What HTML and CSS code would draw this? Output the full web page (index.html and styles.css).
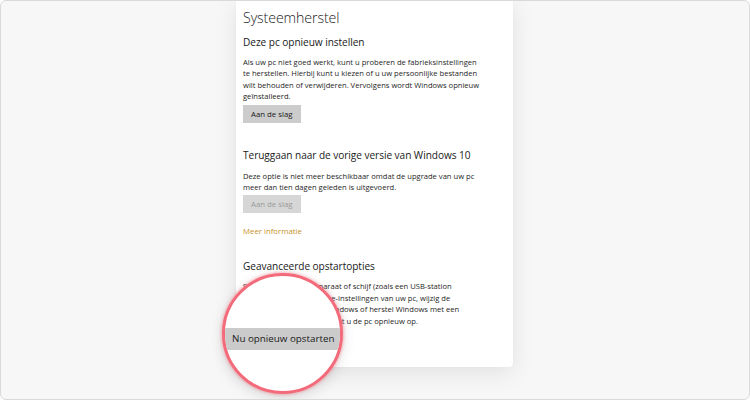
FILE: index.html
```html
<!DOCTYPE html>
<html lang="nl">
<head>
<meta charset="utf-8">
<title>Systeemherstel</title>
<link rel="stylesheet" href="styles.css">
</head>
<body>
<div class="frame">
  <main class="panel">
    <h1 class="title">Systeemherstel</h1>

    <section class="section">
      <h2 class="heading">Deze pc opnieuw instellen</h2>
      <p class="text">Als uw pc niet goed werkt, kunt u proberen de fabrieksinstellingen<br>te herstellen. Hierbij kunt u kiezen of u uw persoonlijke bestanden<br>wilt behouden of verwijderen. Vervolgens wordt Windows opnieuw<br>geïnstalleerd.</p>
      <button class="btn">Aan de slag</button>
    </section>

    <section class="section">
      <h2 class="heading">Teruggaan naar de vorige versie van Windows 10</h2>
      <p class="text">Deze optie is niet meer beschikbaar omdat de upgrade van uw pc<br>meer dan tien dagen geleden is uitgevoerd.</p>
      <button class="btn btn-disabled" disabled>Aan de slag</button>
      <a class="link" href="#">Meer informatie</a>
    </section>

    <section class="section">
      <h2 class="heading">Geavanceerde opstartopties</h2>
      <p class="text">Start op vanaf een apparaat of schijf (zoals een USB-station<br>of dvd), wijzig de firmware-instellingen van uw pc, wijzig de<br>opstartinstellingen van Windows of herstel Windows met een<br>systeemkopie. Hiermee start u de pc opnieuw op.</p>
      <button class="btn btn-under-lens" aria-hidden="true">Nu opnieuw opstarten</button>
    </section>
  </main>

  <div class="magnifier">
    <div class="zoom-btn">Nu opnieuw opstarten</div>
  </div>
</div>
</body>
</html>
```

FILE: styles.css
```css
* { box-sizing: border-box; }

html, body {
  margin: 0;
  padding: 0;
  width: 750px;
  height: 400px;
  overflow: hidden;
  background: #ffffff;
  font-family: "Open Sans", "Noto Sans", "Liberation Sans", sans-serif;
}

.frame {
  position: relative;
  width: 750px;
  height: 400px;
  background: #f7f7f7;
  border: 1px solid #d9d9d9;
  border-radius: 6px;
  overflow: hidden;
  display: flex;
  align-items: flex-start;
}

.panel {
  margin-left: 235px;
  width: 277px;
  height: 366px;
  background: #ffffff;
  border-radius: 0 0 4px 4px;
  box-shadow: 0 6px 24px rgba(0, 0, 0, 0.09), 0 0 3px rgba(0, 0, 0, 0.03);
  padding: 6px 0 0 7px;
  color: #1a1a1a;
}

.title {
  margin: 0;
  font-size: 14.2px;
  font-weight: 300;
  line-height: 22px;
  letter-spacing: -0.1px;
}

.section {
  display: flex;
  flex-direction: column;
  align-items: flex-start;
}

.heading {
  margin: 0;
  font-size: 10.1px;
  font-weight: 400;
  line-height: 16px;
  letter-spacing: -0.05px;
}

.text {
  margin: 7px 0 0;
  font-size: 7.6px;
  line-height: 11.4px;
  color: #1e1e1e;
}

.section:nth-of-type(1) .heading { margin-top: 5px; }
.section:nth-of-type(2) .heading { margin-top: 24px; }
.section:nth-of-type(2) .text { margin-top: 8px; }
.section:nth-of-type(3) .heading { margin-top: 22px; }

.btn {
  margin-top: 2px;
  height: 18px;
  padding: 0 8px;
  border: none;
  background: #cccccc;
  color: #1a1a1a;
  font-family: inherit;
  font-size: 7.8px;
  min-width: 56px;
}

.btn-disabled {
  background: #d6d6d6;
  color: #9a9a9a;
}

.btn-under-lens {
  visibility: hidden;
}

.link {
  margin-top: 13px;
  font-size: 7.8px;
  color: #c8912b;
  text-decoration: none;
}

.magnifier {
  position: absolute;
  left: 221px;
  top: 272px;
  width: 121px;
  height: 121px;
  border-radius: 50%;
  background: #ffffff;
  border: 3px solid #f36b7b;
  box-shadow: 0 0 3px 1px rgba(243, 107, 123, 0.45), 0 4px 14px rgba(0, 0, 0, 0.12);
  overflow: hidden;
}

.zoom-btn {
  margin-top: 52px;
  width: 100%;
  height: 22px;
  background: #cbcbcb;
  color: #1a1a1a;
  font-size: 9.8px;
  line-height: 22px;
  padding-left: 7px;
  white-space: nowrap;
}
```
